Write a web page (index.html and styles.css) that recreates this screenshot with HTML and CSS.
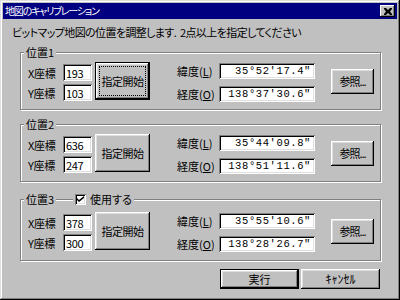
FILE: index.html
```html
<!DOCTYPE html>
<html lang="ja">
<head>
  <meta charset="UTF-8">
  <title>地図のキャリブレーション</title>
  <link rel="stylesheet" href="styles.css">
</head>
<body>
  <div class="window">
    <div class="titlebar">
      <span class="title">地図のキャリブレーション</span>
      <span class="close">
        <svg width="8" height="7" viewBox="0 0 8 7"><path d="M0 0h2l2 2 2-2h2v1L6 3.5 8 6v1H6L4 5 2 7H0V6l2-2.5L0 1z" fill="#000"/></svg>
      </span>
    </div>

    <p class="intro">ビットマップ地図の位置を調整します.&nbsp; 2点以上を指定してください</p>

    <!-- 位置1 -->
    <div class="group">
      <div class="legend"><span class="legend-text">位置1</span></div>
      <div class="row">
        <div class="coords">
          <div class="coord"><span class="coord-label">X座標</span><span class="field num">193</span></div>
          <div class="coord"><span class="coord-label">Y座標</span><span class="field num">103</span></div>
        </div>
        <button class="btn start default focused">指定開始</button>
        <div class="geo">
          <div class="geo-row"><span class="geo-label">緯度(<u>L</u>)</span><span class="field dms">35°52'17.4"</span></div>
          <div class="geo-row"><span class="geo-label">経度(<u>O</u>)</span><span class="field dms">138°37'30.6"</span></div>
        </div>
        <button class="btn ref">参照...</button>
      </div>
    </div>

    <!-- 位置2 -->
    <div class="group">
      <div class="legend"><span class="legend-text">位置2</span></div>
      <div class="row">
        <div class="coords">
          <div class="coord"><span class="coord-label">X座標</span><span class="field num">636</span></div>
          <div class="coord"><span class="coord-label">Y座標</span><span class="field num">247</span></div>
        </div>
        <button class="btn start">指定開始</button>
        <div class="geo">
          <div class="geo-row"><span class="geo-label">緯度(<u>L</u>)</span><span class="field dms">35°44'09.8"</span></div>
          <div class="geo-row"><span class="geo-label">経度(<u>O</u>)</span><span class="field dms">138°51'11.6"</span></div>
        </div>
        <button class="btn ref">参照...</button>
      </div>
    </div>

    <!-- 位置3 -->
    <div class="group group-opt">
      <div class="legend">
        <span class="legend-text">位置3</span>
        <span class="legend-check"><span class="checkbox">
          <svg width="7" height="7" viewBox="0 0 7 7"><path d="M0 2l2 2 5-4v2L2 6 0 4z" fill="#000"/></svg>
        </span>使用する</span>
      </div>
      <div class="row">
        <div class="coords">
          <div class="coord"><span class="coord-label">X座標</span><span class="field num">378</span></div>
          <div class="coord"><span class="coord-label">Y座標</span><span class="field num">300</span></div>
        </div>
        <button class="btn start">指定開始</button>
        <div class="geo">
          <div class="geo-row"><span class="geo-label">緯度(<u>L</u>)</span><span class="field dms">35°55'10.6"</span></div>
          <div class="geo-row"><span class="geo-label">経度(<u>O</u>)</span><span class="field dms">138°28'26.7"</span></div>
        </div>
        <button class="btn ref">参照...</button>
      </div>
    </div>

    <div class="footer">
      <button class="btn wide default">実行</button>
      <button class="btn wide cancel">ｷｬﾝｾﾙ</button>
    </div>
  </div>
</body>
</html>
```

FILE: styles.css
```css
* { box-sizing: border-box; }
body { margin: 0; background: #c0c0c0; color: #000; font-family: "Noto Sans CJK JP", "Noto Sans", sans-serif; font-size: 11px; line-height: 12px; font-feature-settings: "palt"; }

/* Fenster */
.window { width: 400px; height: 300px; padding: 3px; background: #c0c0c0; box-shadow: inset -1px -1px #000, inset 1px 1px #dfdfdf, inset -2px -2px #808080, inset 2px 2px #fff; }
.titlebar { height: 16px; background: #000080; color: #fff; display: flex; align-items: center; justify-content: space-between; padding: 0 2px 0 2px; }
.title { font-size: 10px; letter-spacing: -1.2px; }
.close { width: 15px; height: 12px; display: flex; align-items: center; justify-content: center; background: #c0c0c0; box-shadow: inset -1px -1px #000, inset 1px 1px #fff, inset -2px -2px #808080; }

.intro { margin: 7px 0 0 9px; letter-spacing: -0.6px; }

/* Gruppen */
.group { width: 361px; margin: 14px 0 0 17px; padding: 0 6px 9px 7px; border: 1px solid #808080; box-shadow: inset 1px 1px #fff, 1px 1px #fff; }
.group-opt { margin-top: 17px; padding-bottom: 10px; }
.legend { display: flex; align-items: center; height: 12px; margin: -7px 0 0 -4px; }
.legend-text, .legend-check { background: #c0c0c0; padding: 0 2px; }
.legend-check { display: flex; align-items: center; gap: 4px; margin-left: 17px; }
.checkbox { width: 11px; height: 11px; display: flex; align-items: center; justify-content: center; background: #fff; box-shadow: inset 1px 1px #808080, inset -1px -1px #fff, inset 2px 2px #000, inset -2px -2px #dfdfdf; }

.row { display: flex; align-items: center; height: 38px; margin-top: 4px; }
.group-opt .row { margin-top: 7px; }

.coords { display: flex; flex-direction: column; gap: 3px; align-self: flex-start; margin-top: 2px; }
.coord { display: flex; align-items: center; }
.coord-label { width: 35px; letter-spacing: -0.3px; }

.field { display: block; background: #fff; box-shadow: inset 1px 1px #808080, inset -1px -1px #fff, inset 2px 2px #000, inset -2px -2px #dfdfdf; }
.num { width: 29px; height: 17px; padding: 3px 2px 0 3px; letter-spacing: -0.3px; }

.geo { display: flex; flex-direction: column; gap: 7px; margin-left: 27px; align-self: flex-start; margin-top: 1px; }
.geo-row { display: flex; align-items: center; }
.geo-label { width: 42px; }
.dms { width: 96px; height: 16px; padding: 2px 4px 0 0; text-align: right; font-family: "Liberation Mono", monospace; font-size: 10.5px; letter-spacing: 0.6px; }

/* Knöpfe */
.btn { position: relative; font: inherit; color: #000; background: #c0c0c0; border: none; padding: 0; box-shadow: inset -1px -1px #000, inset 1px 1px #fff, inset -2px -2px #808080, inset 2px 2px #dfdfdf; }
.btn.default { border: 1px solid #000; }
.btn.focused::after { content: ""; position: absolute; inset: 3px; border: 1px dotted #000; }
.start { width: 55px; height: 38px; margin-left: 3px; letter-spacing: -0.5px; }
.ref { width: 43px; height: 25px; margin-left: 16px; letter-spacing: -1px; }

.footer { display: flex; justify-content: flex-end; gap: 2px; width: 361px; margin: 8px 0 0 17px; padding-right: 1px; }
.wide { width: 79px; height: 20px; }
.cancel { font-size: 12px; }
```
